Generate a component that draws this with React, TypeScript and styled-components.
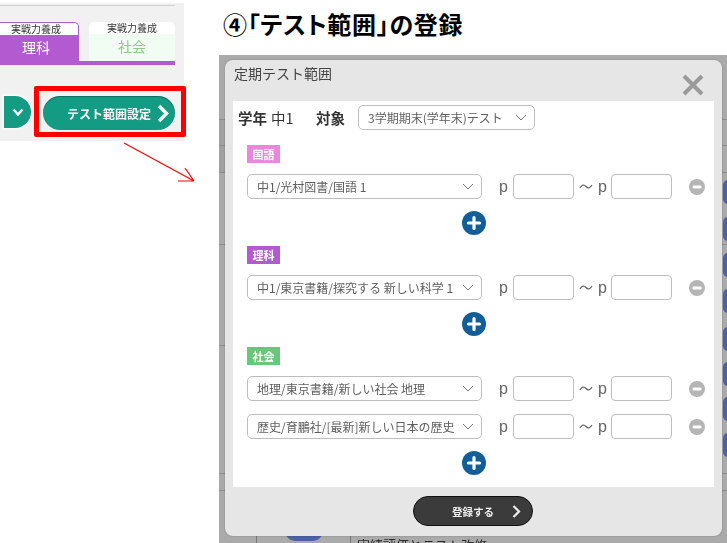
import React from "react";
import styled, { createGlobalStyle } from "styled-components";

const Global = createGlobalStyle`
  html, body { margin: 0; padding: 0; background: #fff; }
  body { font-family: "Noto Sans CJK JP", "Noto Sans", sans-serif; }
  * { box-sizing: border-box; }
`;

const Page = styled.div`
  position: relative;
  display: flex;
  width: 727px;
  height: 543px;
  overflow: hidden;
  background: #fff;
`;

const LeftColumn = styled.aside`
  width: 219px;
  flex: none;
`;

const Thumb = styled.div`
  position: relative;
  width: 184px;
  height: 138px;
  margin-top: 3px;
  padding-top: 2px;
  background: #f1f1f1;
  filter: blur(0.35px);
`;

const Rule = styled.div`
  width: 175px;
  height: 1px;
  background: #cfcfcf;
`;

const TabBar = styled.div`
  display: flex;
  gap: 10px;
  width: 175px;
  height: 43px;
  margin-top: 16px;
  border-bottom: 4px solid #b45ad0;
`;

const Tab = styled.div<{ $active?: boolean }>`
  display: flex;
  flex-direction: column;
  width: ${(p) => (p.$active ? "79px" : "86px")};
  border-radius: ${(p) => (p.$active ? "0 5px 0 0" : "5px 5px 0 0")};
  ${(p) => (p.$active ? "border: 1px solid #b45ad0; border-left: 0; border-bottom: 0;" : "")}
  background: #fff;
`;

const TabCaption = styled.div<{ $active?: boolean }>`
  height: 12px;
  padding-right: ${(p) => (p.$active ? "6px" : "0")};
  font-size: 10px;
  line-height: 12px;
  text-align: center;
  color: #333;
`;

const TabName = styled.div<{ $active?: boolean }>`
  flex: 1;
  padding-right: ${(p) => (p.$active ? "6px" : "0")};
  font-size: 14px;
  line-height: 25px;
  text-align: center;
  color: ${(p) => (p.$active ? "#fff" : "#8ccb85")};
  background: ${(p) => (p.$active ? "#b45ad0" : "#f1fcf2")};
`;

const ActionRow = styled.div`
  display: flex;
  align-items: flex-start;
  margin-top: 31px;
  padding-left: 4px;
`;

const Toggle = styled.div`
  display: flex;
  align-items: center;
  justify-content: center;
  width: 27px;
  height: 32px;
  border-radius: 0 16px 16px 0;
  background: #149b83;
  box-shadow: 0 0 0 1.5px #fff;
`;

const RangeButton = styled.button`
  display: flex;
  align-items: center;
  justify-content: flex-end;
  gap: 6px;
  width: 132px;
  height: 34px;
  margin: 0 0 0 12px;
  padding: 0 6px 0 0;
  border: 0;
  border-radius: 17px;
  background: #149b83;
  box-shadow: inset 0 1px 1px rgba(0, 0, 0, 0.3);
  color: #fff;
  font-family: inherit;
  font-size: 12px;
  font-weight: 700;
`;

const RedFrame = styled.div`
  position: absolute;
  left: 34px;
  top: 83px;
  width: 152px;
  height: 51px;
  border: 5px solid #f00;
  border-radius: 2px;
`;

const ArrowSvg = styled.svg`
  position: absolute;
  left: 120px;
  top: 140px;
`;

const RightColumn = styled.main`
  flex: 1;
  display: flex;
  flex-direction: column;
  min-width: 0;
`;

const Heading = styled.h1`
  height: 55px;
  margin: 0;
  padding: 9px 0 0 4px;
  font-size: 24px;
  line-height: 30px;
  font-weight: 700;
  color: #000;
  font-feature-settings: "palt";
  letter-spacing: 0.7px;
`;

const Backdrop = styled.div`
  position: relative;
  flex: 1;
  padding: 5px 5px 7px 6px;
  overflow: hidden;
  background: #aaaaaa;
  filter: blur(0.4px);
`;

const BackBand = styled.div`
  position: absolute;
  left: 0;
  top: 64px;
  width: 8px;
  height: 53px;
  background: #a0a0a0;
`;

const BackLine = styled.div<{ $y: number }>`
  position: absolute;
  left: 0;
  right: 0;
  top: ${(p) => p.$y - 55}px;
  height: 1px;
  background: #8d8d8d;
`;

const BackPill = styled.div<{ $y: number }>`
  position: absolute;
  right: -6px;
  top: ${(p) => p.$y - 55}px;
  width: 10px;
  height: 24px;
  border-radius: 5px;
  background: #4c62a6;
`;

const BackColumnLine = styled.div<{ $x: number }>`
  position: absolute;
  left: ${(p) => p.$x - 219}px;
  bottom: 0;
  width: 1px;
  height: 8px;
  background: #777;
`;

const BackBlob = styled.div`
  position: absolute;
  left: 66px;
  bottom: 2px;
  width: 38px;
  height: 10px;
  border-radius: 0 0 19px 19px;
  background: #4c62a6;
`;

const BackText = styled.div`
  position: absolute;
  left: 138px;
  top: 482px;
  font-size: 13px;
  line-height: 16px;
  white-space: nowrap;
  color: #2c2c2c;
`;

const Dialog = styled.section`
  position: relative;
  z-index: 1;
  display: flex;
  flex-direction: column;
  height: 476px;
  border-radius: 8px;
  background: #e6e6e6;
  box-shadow: 0 0 2px rgba(0, 0, 0, 0.25);
`;

const DialogHeader = styled.header`
  display: flex;
  justify-content: space-between;
  height: 41px;
  padding: 4px 18px 0 9px;
`;

const DialogTitle = styled.h2`
  margin: 0;
  font-size: 14px;
  line-height: 18px;
  font-weight: 400;
  color: #444;
`;

const CloseIcon = styled.svg`
  margin-top: 10px;
`;

const DialogBody = styled.div`
  flex: 1;
  margin: 0 8px;
  padding: 4px 0 0;
  background: #fff;
`;

const HeadRow = styled.div`
  display: flex;
  align-items: center;
  height: 25px;
  padding-left: 5px;
  font-size: 14.5px;
  color: #333;
`;

const Strong = styled.b`
  width: 29px;
  font-weight: 700;
  white-space: nowrap;
`;

const GradeValue = styled.span`
  width: 23px;
  margin: 0 0 0 4px;
  white-space: nowrap;
`;

const TargetLabel = styled.b`
  width: 29px;
  margin-left: 22px;
  margin-right: 13px;
  font-weight: 700;
  white-space: nowrap;
`;

const SelectBox = styled.div<{ $width?: number }>`
  display: flex;
  align-items: center;
  justify-content: space-between;
  width: ${(p) => p.$width ?? 235}px;
  height: 25px;
  padding: 0 7px 0 9px;
  border: 1.5px solid #bdbdbd;
  border-radius: 5px;
  background: #fff;
  font-size: 12px;
  color: #5e5e5e;
  white-space: nowrap;
  overflow: hidden;
`;

const Section = styled.div`
  padding-left: 14px;
  margin-top: 11px;
`;

const FirstGap = styled.div`
  height: 4px;
`;

const Tag = styled.span<{ $color: string }>`
  display: block;
  width: 33px;
  height: 18px;
  font-size: 11px;
  font-weight: 700;
  line-height: 18px;
  text-align: center;
  color: #fff;
  background: ${(p) => p.$color};
`;

const EntryRow = styled.div`
  display: grid;
  grid-template-columns: 235px 31px 61px 37px 61px 17px 16px;
  align-items: center;
  height: 25px;
  margin-top: 11px;
  & + & {
    margin-top: 13px;
  }
`;

const PageLabel = styled.span`
  padding-left: 17px;
  font-family: "Liberation Sans", sans-serif;
  font-size: 16px;
  color: #666;
`;

const PageInput = styled.input`
  width: 61px;
  height: 25px;
  padding: 0 4px;
  border: 1.5px solid #bdbdbd;
  border-radius: 4px;
  background: #fff;
`;

const Separator = styled.span`
  display: flex;
  justify-content: space-between;
  align-items: center;
  padding: 0 4px 0 5px;
  font-family: "Liberation Sans", sans-serif;
  font-size: 16px;
  color: #666;
`;

const Tilde = styled.svg`
  flex: none;
`;

const Spacer = styled.span``;

const AddRow = styled.div`
  display: flex;
  justify-content: center;
  width: 453px;
  margin-top: 12px;
`;

const FooterBar = styled.footer`
  display: flex;
  align-items: center;
  justify-content: center;
  height: 49px;
  padding: 9px 1px 10px 0;
`;

const SubmitButton = styled.button`
  position: relative;
  display: flex;
  align-items: center;
  justify-content: center;
  width: 120px;
  height: 30px;
  padding: 0;
  border: 1px solid #111;
  border-radius: 15px;
  background: #3b3b3b;
  color: #eee;
  font-family: inherit;
  font-size: 10.5px;
  font-weight: 700;
`;

const SubmitChevron = styled.svg`
  position: absolute;
  right: 11px;
  top: 8px;
`;

const MinusIcon = () => (
  <svg width="16" height="16" viewBox="0 0 16 16">
    <circle cx="8" cy="8" r="8" fill="#b5b5b5" />
    <rect x="3.5" y="6.6" width="9" height="2.8" rx="1.2" fill="#fff" />
  </svg>
);

const PlusIcon = () => (
  <svg width="24" height="24" viewBox="0 0 24 24">
    <circle cx="12" cy="12" r="12" fill="#125f97" />
    <path d="M12 6.5v11M6.5 12h11" stroke="#fff" strokeWidth="3.2" strokeLinecap="round" />
  </svg>
);

const Chevron = () => (
  <svg width="12" height="7" viewBox="0 0 12 7" style={{ flex: "none" }}>
    <path d="M1 1 6 6l5-5" fill="none" stroke="#777" strokeWidth="1" />
  </svg>
);

const Entry = ({ book }: { book: string }) => (
  <EntryRow>
    <SelectBox>
      {book}
      <Chevron />
    </SelectBox>
    <PageLabel>p</PageLabel>
    <PageInput />
    <Separator>
      <Tilde width="14" height="7" viewBox="0 0 14 7">
        <path d="M1 5C3 1.5 5 1.5 7 3.5S11 5.5 13 2" fill="none" stroke="#666" strokeWidth="1.3" />
      </Tilde>
      <span>p</span>
    </Separator>
    <PageInput />
    <Spacer />
    <MinusIcon />
  </EntryRow>
);

const Add = () => (
  <AddRow>
    <PlusIcon />
  </AddRow>
);

const lines = [119, 145, 172, 244, 345, 473, 490];
const pills = [180, 217, 253, 289, 327, 362, 397, 433];

export default function App() {
  return (
    <Page>
      <Global />
      <LeftColumn>
        <Thumb>
          <Rule />
          <TabBar>
            <Tab $active>
              <TabCaption $active>実戦力養成</TabCaption>
              <TabName $active>理科</TabName>
            </Tab>
            <Tab>
              <TabCaption>実戦力養成</TabCaption>
              <TabName>社会</TabName>
            </Tab>
          </TabBar>
          <ActionRow>
            <Toggle>
              <svg width="12" height="9" viewBox="0 0 12 9">
                <path d="M1.5 1.5 6 6.5l4.5-5" fill="none" stroke="#fff" strokeWidth="2.4" />
              </svg>
            </Toggle>
            <RangeButton>
              テスト範囲設定
              <svg width="12" height="19" viewBox="0 0 12 19">
                <path d="M2 2 9.5 9.5 2 17" fill="none" stroke="#fff" strokeWidth="3.4" />
              </svg>
            </RangeButton>
          </ActionRow>
          <RedFrame />
        </Thumb>
      </LeftColumn>
      <ArrowSvg width="80" height="50" viewBox="0 0 80 50">
        <path d="M4 3 74 41M58 41h16M65 28l9 13" fill="none" stroke="#f00" strokeWidth="1.2" />
      </ArrowSvg>
      <RightColumn>
        <Heading>④「テスト範囲」の登録</Heading>
        <Backdrop>
          <BackBand />
          {lines.map((y) => (
            <BackLine key={y} $y={y} />
          ))}
          {pills.map((y) => (
            <BackPill key={y} $y={y} />
          ))}
          <BackColumnLine $x={256} />
          <BackColumnLine $x={350} />
          <BackBlob />
          <BackText>実績評価とテスト改修</BackText>
          <Dialog>
            <DialogHeader>
              <DialogTitle>定期テスト範囲</DialogTitle>
              <CloseIcon width="22" height="22" viewBox="0 0 22 22">
                <path d="M2 2 20 20M20 2 2 20" stroke="#9a9a9a" strokeWidth="4" />
              </CloseIcon>
            </DialogHeader>
            <DialogBody>
              <HeadRow>
                <Strong>学年</Strong>
                <GradeValue>中1</GradeValue>
                <TargetLabel>対象</TargetLabel>
                <SelectBox $width={177}>
                  3学期期末(学年末)テスト
                  <Chevron />
                </SelectBox>
              </HeadRow>
              <FirstGap />
              <Section>
                <Tag $color="#ea86dc">国語</Tag>
                <Entry book="中1/光村図書/国語 1" />
                <Add />
              </Section>
              <Section>
                <Tag $color="#b45ad0">理科</Tag>
                <Entry book="中1/東京書籍/探究する 新しい科学 1" />
                <Add />
              </Section>
              <Section>
                <Tag $color="#66c878">社会</Tag>
                <Entry book="地理/東京書籍/新しい社会 地理" />
                <Entry book="歴史/育鵬社/[最新]新しい日本の歴史" />
                <Add />
              </Section>
            </DialogBody>
            <FooterBar>
              <SubmitButton>
                登録する
                <SubmitChevron width="9" height="13" viewBox="0 0 9 13">
                  <path d="M1.5 1 7 6.5 1.5 12" fill="none" stroke="#eee" strokeWidth="2.2" />
                </SubmitChevron>
              </SubmitButton>
            </FooterBar>
          </Dialog>
        </Backdrop>
      </RightColumn>
    </Page>
  );
}
